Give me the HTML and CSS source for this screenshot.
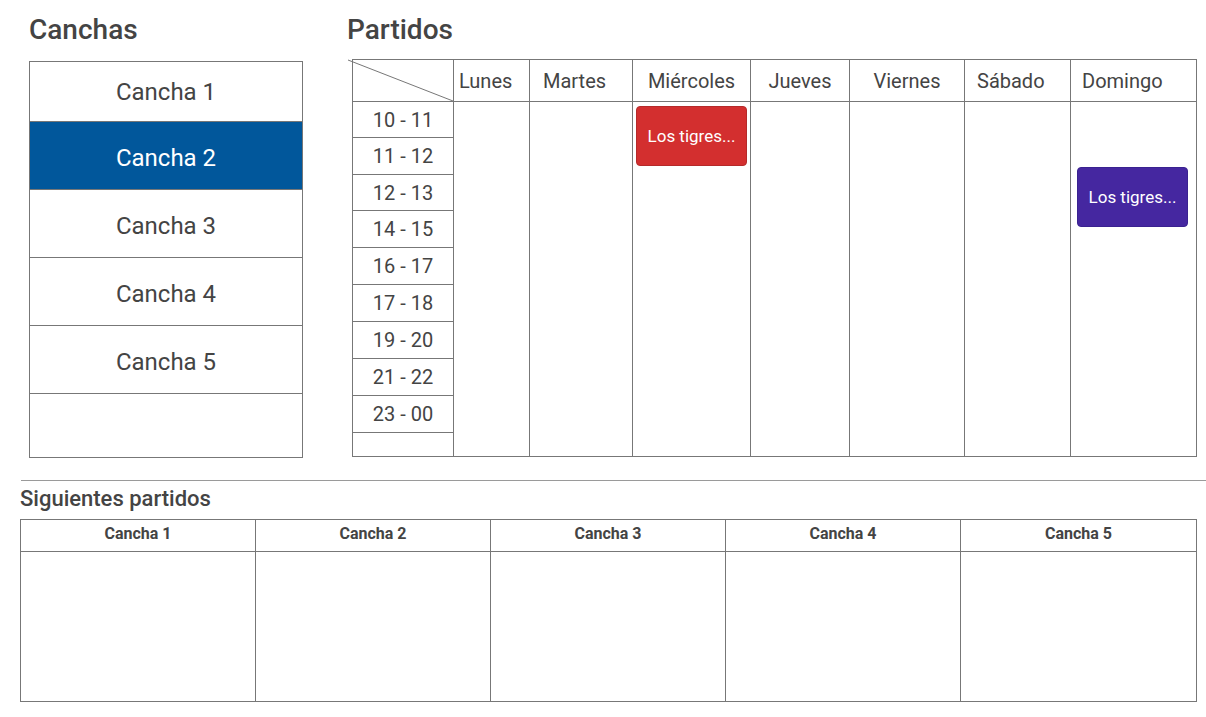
FILE: index.html
```html
<!DOCTYPE html>
<html lang="es">
<head>
<meta charset="utf-8">
<title>Canchas y partidos</title>
<link rel="stylesheet" href="styles.css">
</head>
<body>
<div class="top">
  <section class="canchas">
    <h2 class="title">Canchas</h2>
    <ul class="court-list">
      <li class="court">Cancha 1</li>
      <li class="court active">Cancha 2</li>
      <li class="court">Cancha 3</li>
      <li class="court">Cancha 4</li>
      <li class="court">Cancha 5</li>
      <li class="court empty"></li>
    </ul>
  </section>
  <section class="partidos">
    <h2 class="title">Partidos</h2>
    <div class="schedule">
      <div class="corner">
        <svg class="diag" viewBox="0 0 100 41" preserveAspectRatio="none"><line x1="-5" y1="0" x2="100" y2="41" stroke="#777" stroke-width="1" vector-effect="non-scaling-stroke"/></svg>
      </div>
      <div class="day-head left-6">Lunes</div>
      <div class="day-head left-14">Martes</div>
      <div class="day-head">Miércoles</div>
      <div class="day-head">Jueves</div>
      <div class="day-head">Viernes</div>
      <div class="day-head left-13">Sábado</div>
      <div class="day-head left-12 last">Domingo</div>
      <div class="times">
        <div class="slot">10 - 11</div>
        <div class="slot">11 - 12</div>
        <div class="slot">12 - 13</div>
        <div class="slot">14 - 15</div>
        <div class="slot">16 - 17</div>
        <div class="slot">17 - 18</div>
        <div class="slot">19 - 20</div>
        <div class="slot">21 - 22</div>
        <div class="slot">23 - 00</div>
        <div class="slot rest"></div>
      </div>
      <div class="day-col"></div>
      <div class="day-col"></div>
      <div class="day-col"><div class="event red">Los tigres...</div></div>
      <div class="day-col"></div>
      <div class="day-col"></div>
      <div class="day-col"></div>
      <div class="day-col last"><div class="event purple">Los tigres...</div></div>
    </div>
  </section>
</div>
<hr class="sep">
<section class="next">
  <h3 class="next-title">Siguientes partidos</h3>
  <div class="next-table">
    <div class="next-head">Cancha 1</div>
    <div class="next-head">Cancha 2</div>
    <div class="next-head">Cancha 3</div>
    <div class="next-head">Cancha 4</div>
    <div class="next-head last">Cancha 5</div>
    <div class="next-cell"></div>
    <div class="next-cell"></div>
    <div class="next-cell"></div>
    <div class="next-cell"></div>
    <div class="next-cell last"></div>
  </div>
</section>
</body>
</html>
```

FILE: styles.css
```css
* { box-sizing: border-box; }
html, body { margin: 0; padding: 0; background: #fff; }
body {
  font-family: Roboto, "Liberation Sans", sans-serif;
  color: #444;
  width: 1206px;
  height: 717px;
  overflow: hidden;
}

.top {
  display: flex;
  padding: 15px 0 0 29px;
}

.title {
  margin: 0;
  font-size: 28px;
  line-height: 30px;
  font-weight: 500;
  color: #444;
}

.canchas { width: 274px; }
.canchas .title { margin-bottom: 16px; }

.court-list {
  list-style: none;
  margin: 0;
  padding: 0;
  width: 274px;
  height: 397px;
  border: 1px solid #777;
  display: flex;
  flex-direction: column;
}
.court {
  height: 68px;
  padding-top: 5px;
  border-bottom: 1px solid #777;
  display: flex;
  align-items: center;
  justify-content: center;
  font-size: 24px;
  color: #444;
}
.court:first-child { height: 60px; padding-top: 0; }
.court.active { background: #01579b; color: #fff; }
.court.empty { flex: 1; border-bottom: 0; }

.partidos { margin-left: 44px; }
.partidos .title { margin-bottom: 14px; }

.schedule {
  margin-left: 5px;
  width: 845px;
  height: 398px;
  border: 1px solid #777;
  display: grid;
  grid-template-columns: 101px 76px 103px 118px 99px 115px 106px 1fr;
  grid-template-rows: 42px 1fr;
}

.corner {
  position: relative;
  border-right: 1px solid #777;
  border-bottom: 1px solid #777;
}
.diag {
  position: absolute;
  left: 0; top: 0;
  width: 100%;
  height: 100%;
  overflow: visible;
}

.day-head {
  border-right: 1px solid #777;
  border-bottom: 1px solid #777;
  display: flex;
  align-items: center;
  justify-content: center;
  font-size: 20px;
  color: #444;
}
.day-head.left-6 { justify-content: flex-start; padding-left: 5px; }
.day-head.left-14 { justify-content: flex-start; padding-left: 13px; }
.day-head.left-13 { justify-content: flex-start; padding-left: 12px; }
.day-head.left-12 { justify-content: flex-start; padding-left: 11px; }
.day-head.last { border-right: 0; }

.times {
  border-right: 1px solid #777;
  display: flex;
  flex-direction: column;
}
.slot {
  height: 37px;
  border-bottom: 1px solid #777;
  display: flex;
  align-items: center;
  justify-content: center;
  font-size: 20px;
  color: #444;
}
.slot:nth-child(1), .slot:nth-child(3) { height: 36px; }
.slot.rest { flex: 1; border-bottom: 0; }

.day-col { border-right: 1px solid #777; }
.day-col.last { border-right: 0; }

.event {
  width: 111px;
  height: 60px;
  border-radius: 4px;
  color: #fff;
  font-size: 17px;
  display: flex;
  align-items: center;
  justify-content: center;
}
.event.red {
  background: #d32f2f;
  border: 1px solid #b52a2a;
  margin: 4px 0 0 3px;
}
.event.purple {
  background: #4527a0;
  border: 1px solid #3a2290;
  margin: 65px 0 0 6px;
}

.sep {
  margin: 22px 0 0 21px;
  border: 0;
  height: 1px;
  background: #9a9a9a;
}

.next { padding-left: 20px; }
.next-title {
  margin: 6px 0 8px 0;
  font-size: 22px;
  line-height: 24px;
  font-weight: 500;
  color: #444;
}
.next-table {
  width: 1177px;
  height: 183px;
  border: 1px solid #777;
  display: grid;
  grid-template-columns: repeat(5, 1fr);
  grid-template-rows: 32px 1fr;
}
.next-head {
  border-right: 1px solid #777;
  border-bottom: 1px solid #777;
  padding-bottom: 4px;
  display: flex;
  align-items: center;
  justify-content: center;
  font-size: 16px;
  font-weight: 700;
  color: #444;
}
.next-cell { border-right: 1px solid #777; }
.next-head.last, .next-cell.last { border-right: 0; }
```
